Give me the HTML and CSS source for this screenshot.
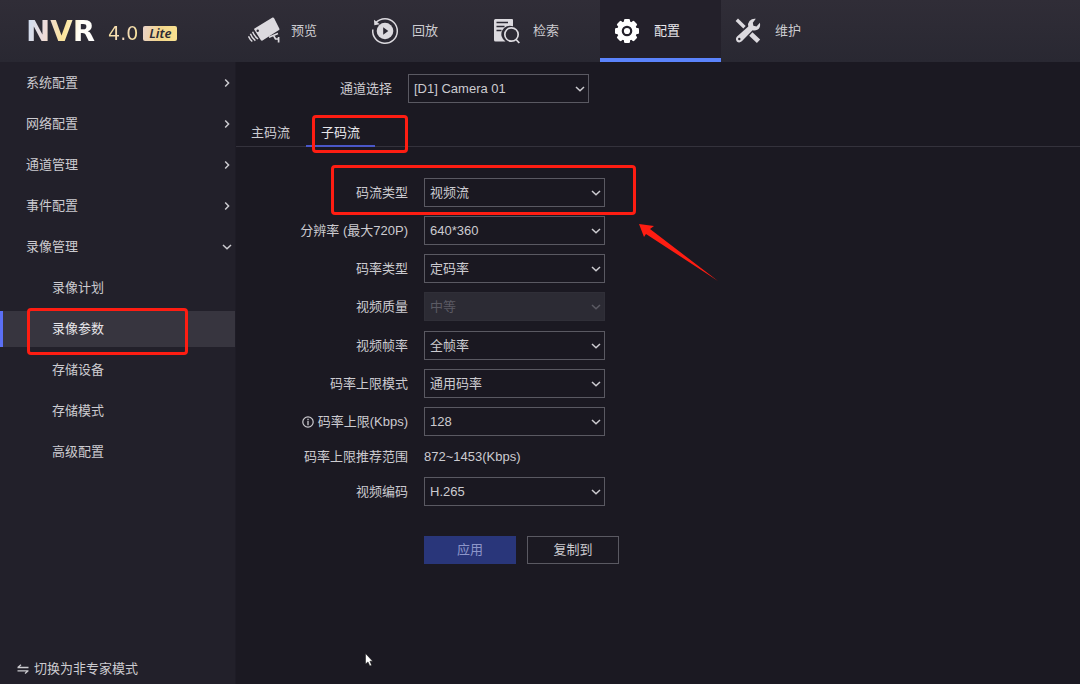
FILE: index.html
```html
<!DOCTYPE html>
<html lang="zh-CN">
<head>
<meta charset="utf-8">
<title>NVR 4.0 Lite</title>
<link rel="stylesheet" href="styles.css">
</head>
<body>
<svg class="sprite" aria-hidden="true">
  <symbol id="down" viewBox="0 0 10 8"><path d="M1 2 5 5.800 9 2" fill="none" stroke="currentColor" stroke-width="1.500"/></symbol>
  <symbol id="right" viewBox="0 0 8 10"><path d="M2.200 1.500 5.600 5 2.200 8.500" fill="none" stroke="currentColor" stroke-width="1.500"/></symbol>
</svg>

<header class="topbar">
  <div class="brand">
    <span class="brand-name">NVR</span>
    <span class="brand-version">4.0</span>
    <span class="brand-badge">Lite</span>
  </div>
  <nav class="topnav">
    <a class="topnav-item" href="#preview">
      <svg class="topnav-icon" viewBox="0 0 32 28"><path d="M6.500 11.500 24.500 .6Q25.500 .2 26 1.100L31.400 11.700Q31.700 12.600 31 13L14.500 23.500Q13.600 24 12.900 23.200L6.200 12.600Q5.900 12 6.500 11.500Z" fill="currentColor"/><circle cx="9.700" cy="13.700" r="1.200" fill="#2b2933"/><path d="M4.600 14.800Q6.200 19 10 22M2.400 16.800Q3.800 20.800 7.400 23.700M.5 19.300Q1.700 22.300 4.300 24.500" fill="none" stroke="currentColor" stroke-width="1.500"/><path d="M21 20.300 30 16.500M25.500 18.300 27.500 22H31M30.600 20V25.500" fill="none" stroke="currentColor" stroke-width="1.700"/></svg>
      <span>预览</span>
    </a>
    <a class="topnav-item" href="#playback">
      <svg class="topnav-icon" viewBox="0 0 32 28"><path d="M3.800 12.500A12.300 12.300 0 1 0 16 1.700Q10.500 1.800 6.500 6" fill="none" stroke="currentColor" stroke-width="1.500"/><path d="M5 2.800 5.300 8.200 10.800 7.300Z" fill="currentColor"/><circle cx="16" cy="14" r="8.300" fill="currentColor"/><path d="M14.200 10.200 19.300 14 14.200 17.800Z" fill="#2b2933"/></svg>
      <span>回放</span>
    </a>
    <a class="topnav-item" href="#search">
      <svg class="topnav-icon" viewBox="0 0 32 28"><path d="M5.500 2H22Q23 2 23 3V9.300A8.500 8.500 0 0 0 15.500 24.500H5.500Q4 24.500 4 23V3.500Q4 2 5.500 2Z" fill="currentColor"/><path d="M6.500 5.500H18M6.500 9.500H14.500M6.500 13.500H11.500" stroke="#2b2933" stroke-width="1.600"/><circle cx="21.500" cy="17.500" r="6.700" fill="none" stroke="currentColor" stroke-width="1.700"/><path d="M26 22.500 29.300 26" stroke="currentColor" stroke-width="1.800"/></svg>
      <span>检索</span>
    </a>
    <a class="topnav-item topnav-active" href="#config" aria-current="page">
      <svg class="topnav-icon" viewBox="0 0 32 28"><g fill="currentColor" transform="translate(16 14)"><circle r="10"/><rect x="-3" y="-12" width="6" height="24" rx="1.300"/><rect x="-3" y="-12" width="6" height="24" rx="1.300" transform="rotate(45)"/><rect x="-3" y="-12" width="6" height="24" rx="1.300" transform="rotate(90)"/><rect x="-3" y="-12" width="6" height="24" rx="1.300" transform="rotate(135)"/></g><circle cx="16" cy="14" r="4.200" fill="none" stroke="#23202a" stroke-width="2.200"/></svg>
      <span>配置</span>
    </a>
    <a class="topnav-item" href="#maintain">
      <svg class="topnav-icon" viewBox="0 0 32 28"><path d="M4.800 2.800 12.500 10.300" stroke="currentColor" stroke-width="3.400"/><path d="M18.800 17 26.500 24.200" stroke="currentColor" stroke-width="4.800"/><path d="M23.800 1.800 20.800 5.800 21.400 8.800 24.500 9.400 27.900 5.700Q29 10.800 25.300 12.800 23 14 20.600 13.300L9.800 24.300Q7.300 26.500 4.800 24.500 2.900 21.900 5 19.600L16.300 9.500Q15.400 6.500 17.500 3.900 20.200 1.200 23.800 1.800Z" fill="currentColor"/><circle cx="7.300" cy="22" r="1.200" fill="#2b2933"/></svg>
      <span>维护</span>
    </a>
  </nav>
</header>

<div class="workspace">
  <aside class="sidebar">
    <nav class="menu">
      <a class="menu-item" href="#system">系统配置<svg class="chevron-right"><use href="#right"/></svg></a>
      <a class="menu-item" href="#network">网络配置<svg class="chevron-right"><use href="#right"/></svg></a>
      <a class="menu-item" href="#channel">通道管理<svg class="chevron-right"><use href="#right"/></svg></a>
      <a class="menu-item" href="#event">事件配置<svg class="chevron-right"><use href="#right"/></svg></a>
      <a class="menu-item" href="#record">录像管理<svg class="chevron-down"><use href="#down"/></svg></a>
      <a class="menu-item menu-sub" href="#schedule">录像计划</a>
      <a class="menu-item menu-sub menu-active" href="#parameter" aria-current="page">录像参数<span class="mark mark-menu"></span></a>
      <a class="menu-item menu-sub" href="#device">存储设备</a>
      <a class="menu-item menu-sub" href="#mode">存储模式</a>
      <a class="menu-item menu-sub" href="#advanced">高级配置</a>
    </nav>
    <button class="mode-switch" type="button">
      <svg class="switch-icon" viewBox="0 0 12 10"><path d="M.5 3.500H11.500M.8 3.500 4 .8M.5 6.800H11.500M11.200 6.800 8 9.500" fill="none" stroke="currentColor" stroke-width="1.300"/></svg>
      切换为非专家模式
    </button>
  </aside>

  <main class="content">
    <div class="row channel-row">
      <label class="label" for="channel">通道选择</label>
      <span class="select"><select id="channel"><option>[D1] Camera 01</option></select><svg><use href="#down"/></svg></span>
    </div>

    <div class="tabs" role="tablist">
      <button class="tab" type="button" role="tab" aria-selected="false">主码流</button>
      <button class="tab tab-active" type="button" role="tab" aria-selected="true">子码流<span class="mark mark-tab"></span></button>
    </div>

    <form class="form">
      <div class="group">
        <div class="row">
          <label class="label" for="stream">码流类型</label>
          <span class="select"><select id="stream"><option>视频流</option></select><svg><use href="#down"/></svg></span>
          <span class="mark mark-row"></span>
          <svg class="arrow" viewBox="0 0 80 58"><path d="M0 0 15 2 11 5 79 57 7 10 5 13Z" fill="#fe1d12"/></svg>
        </div>
        <div class="row">
          <label class="label" for="resolution">分辨率 (最大720P)</label>
          <span class="select"><select id="resolution"><option>640*360</option></select><svg><use href="#down"/></svg></span>
        </div>
        <div class="row">
          <label class="label" for="ratetype">码率类型</label>
          <span class="select"><select id="ratetype"><option>定码率</option></select><svg><use href="#down"/></svg></span>
        </div>
        <div class="row">
          <label class="label" for="quality">视频质量</label>
          <span class="select select-disabled"><select id="quality" disabled><option>中等</option></select><svg><use href="#down"/></svg></span>
        </div>
      </div>
      <div class="group">
        <div class="row">
          <label class="label" for="fps">视频帧率</label>
          <span class="select"><select id="fps"><option>全帧率</option></select><svg><use href="#down"/></svg></span>
        </div>
        <div class="row">
          <label class="label" for="limitmode">码率上限模式</label>
          <span class="select"><select id="limitmode"><option>通用码率</option></select><svg><use href="#down"/></svg></span>
        </div>
        <div class="row">
          <label class="label" for="limit"><svg class="info" viewBox="0 0 12 12"><circle cx="6" cy="6" r="5.200" fill="none" stroke="currentColor" stroke-width="1.200"/><path d="M6 5V9.200M6 2.800V4.200" stroke="currentColor" stroke-width="1.300"/></svg>码率上限(Kbps)</label>
          <span class="select"><select id="limit"><option>128</option></select><svg><use href="#down"/></svg></span>
        </div>
        <div class="row">
          <span class="label">码率上限推荐范围</span>
          <output class="value">872~1453(Kbps)</output>
        </div>
        <div class="row">
          <label class="label" for="codec">视频编码</label>
          <span class="select"><select id="codec"><option>H.265</option></select><svg><use href="#down"/></svg></span>
        </div>
      </div>
      <div class="actions">
        <button class="button button-primary" type="button">应用</button>
        <button class="button" type="button">复制到</button>
      </div>
    </form>

    <svg class="pointer" viewBox="0 0 8 14"><path d="M.5.5V11L3 8.900 4.800 13 6.600 12.200 4.900 8.200H7.700Z" fill="#fff" stroke="#111" stroke-width=".5"/></svg>
  </main>
</div>
</body>
</html>
```

FILE: styles.css
```css
* {
  box-sizing: border-box;
}

body {
  margin: 0;
  min-height: 100vh;
  display: flex;
  flex-direction: column;
  background: #1b1922;
  color: #cccbd0;
  font: 13px/20px "Liberation Sans", "Noto Sans CJK SC", sans-serif;
}

a {
  color: inherit;
  text-decoration: none;
}

button,
select {
  font: inherit;
  color: inherit;
  background: transparent;
  border: 0;
  border-radius: 0;
  margin: 0;
  padding: 0;
}

.sprite {
  position: absolute;
  width: 0;
  height: 0;
}

/* Top bar */
.topbar {
  display: flex;
  height: 62px;
  background: linear-gradient(#302d37, #292832);
}

.brand {
  width: 237px;
  padding-left: 26px;
  display: flex;
  align-items: center;
}

.brand-name,
.brand-version {
  background: linear-gradient(100deg, #cfdcf0 5%, #f0dcd8 30%, #fbe49a 55%, #fffdf5 75%, #fff);
  background-clip: text;
  color: transparent;
  font: 700 29px/32px "DejaVu Sans", sans-serif;
}

.brand-version {
  margin: 4px 5px 0 13px;
  background-image: linear-gradient(100deg, #fbe49a, #f3d8c0 50%, #f8e596);
  font-size: 19px;
  font-weight: 400;
  line-height: 24px;
}

.brand-badge {
  margin-top: 5px;
  padding: 0 6px;
  border-radius: 2px;
  background: linear-gradient(100deg, #e9d3c9, #f3d58b 50%, #f9e391);
  color: #2b2933;
  font: italic 600 13px/15px "Noto Sans", sans-serif;
}

.topnav {
  display: flex;
}

.topnav-item {
  width: 121px;
  padding: 4px 0 0 11px;
  display: flex;
  align-items: center;
  gap: 11px;
  border-bottom: 4px solid transparent;
}

.topnav-icon {
  width: 32px;
  height: 28px;
  color: #dcdadf;
}

.topnav-active {
  background: #23202a;
  border-color: #5b83fb;
  color: #e8e7eb;
}

.topnav-active .topnav-icon {
  color: #fff;
}

/* Sidebar */
.workspace {
  flex: 1;
  display: flex;
}

.sidebar {
  width: 236px;
  display: flex;
  flex-direction: column;
  justify-content: space-between;
  background: #22202a;
  border-right: 1px solid #1e1c26;
}

.menu {
  padding-top: 3px;
  display: grid;
  gap: 5px;
}

.menu-item {
  position: relative;
  height: 36px;
  padding: 0 3px 0 26px;
  display: flex;
  align-items: center;
  justify-content: space-between;
}

.menu-sub {
  padding-left: 52px;
}

.menu-active {
  padding-left: 49px;
  background: #37353f;
  border-left: 3px solid #5b6ff5;
  color: #e8e7eb;
}

.chevron-right {
  width: 8px;
  height: 10px;
  margin-right: 1px;
}

.chevron-down {
  width: 10px;
  height: 8px;
}

.mode-switch {
  padding: 0 0 5px 17px;
  display: flex;
  align-items: center;
  gap: 5px;
}

.switch-icon {
  width: 12px;
  height: 10px;
}

/* Content */
.content {
  flex: 1;
  position: relative;
}

.row {
  position: relative;
  display: flex;
  align-items: center;
  gap: 16px;
}

.label {
  width: 172px;
  display: flex;
  align-items: center;
  justify-content: flex-end;
  white-space: nowrap;
}

.channel-row {
  padding-top: 12px;
}

.channel-row .label {
  width: 156px;
}

.select {
  position: relative;
  display: flex;
}

.select select {
  appearance: none;
  width: 181px;
  height: 29px;
  padding: 0 24px 0 5px;
  border: 1px solid #5a5962;
  background: #1a1821;
}

.select svg {
  position: absolute;
  right: 4px;
  top: 11px;
  width: 10px;
  height: 8px;
  pointer-events: none;
}

.select-disabled select {
  background: #2c2b34;
  border-color: #302f38;
  opacity: 1;
}

.select-disabled {
  color: #5b5a63;
}

.value {
  line-height: 23px;
}

.tabs {
  margin-top: 16px;
  display: flex;
  gap: 1px;
  border-bottom: 1px solid #34323c;
}

.tab {
  position: relative;
  height: 28px;
  padding: 2px 15px 0;
  margin-bottom: -1px;
  border-bottom: 2px solid transparent;
}

.tab-active {
  border-color: #4a57c8;
  color: #e8e7eb;
}

.form {
  padding-top: 31px;
}

.group {
  display: grid;
  gap: 9px;
  margin-bottom: 10px;
}

.info {
  width: 12px;
  height: 12px;
  margin-right: 4px;
}

.actions {
  padding: 20px 0 0 188px;
  display: flex;
  gap: 11px;
}

.button {
  width: 92px;
  height: 28px;
  border: 1px solid #5a5962;
}

.button-primary {
  background: #29367a;
  border-color: #29367a;
  color: #8d96c9;
}

/* Callouts drawn over the interface */
.mark {
  position: absolute;
  border: 3px solid #fe1d12;
  border-radius: 4px;
  pointer-events: none;
}

.mark-menu {
  left: 24px;
  top: -3px;
  width: 161px;
  height: 47px;
}

.mark-tab {
  left: 6px;
  top: -4px;
  width: 96px;
  height: 38px;
}

.mark-row {
  left: 95px;
  top: -13px;
  width: 305px;
  height: 50px;
}

.arrow {
  position: absolute;
  left: 403px;
  top: 46px;
  width: 80px;
  height: 58px;
  pointer-events: none;
}

.pointer {
  position: absolute;
  left: 129px;
  bottom: 17px;
  width: 8px;
  height: 14px;
}
```
